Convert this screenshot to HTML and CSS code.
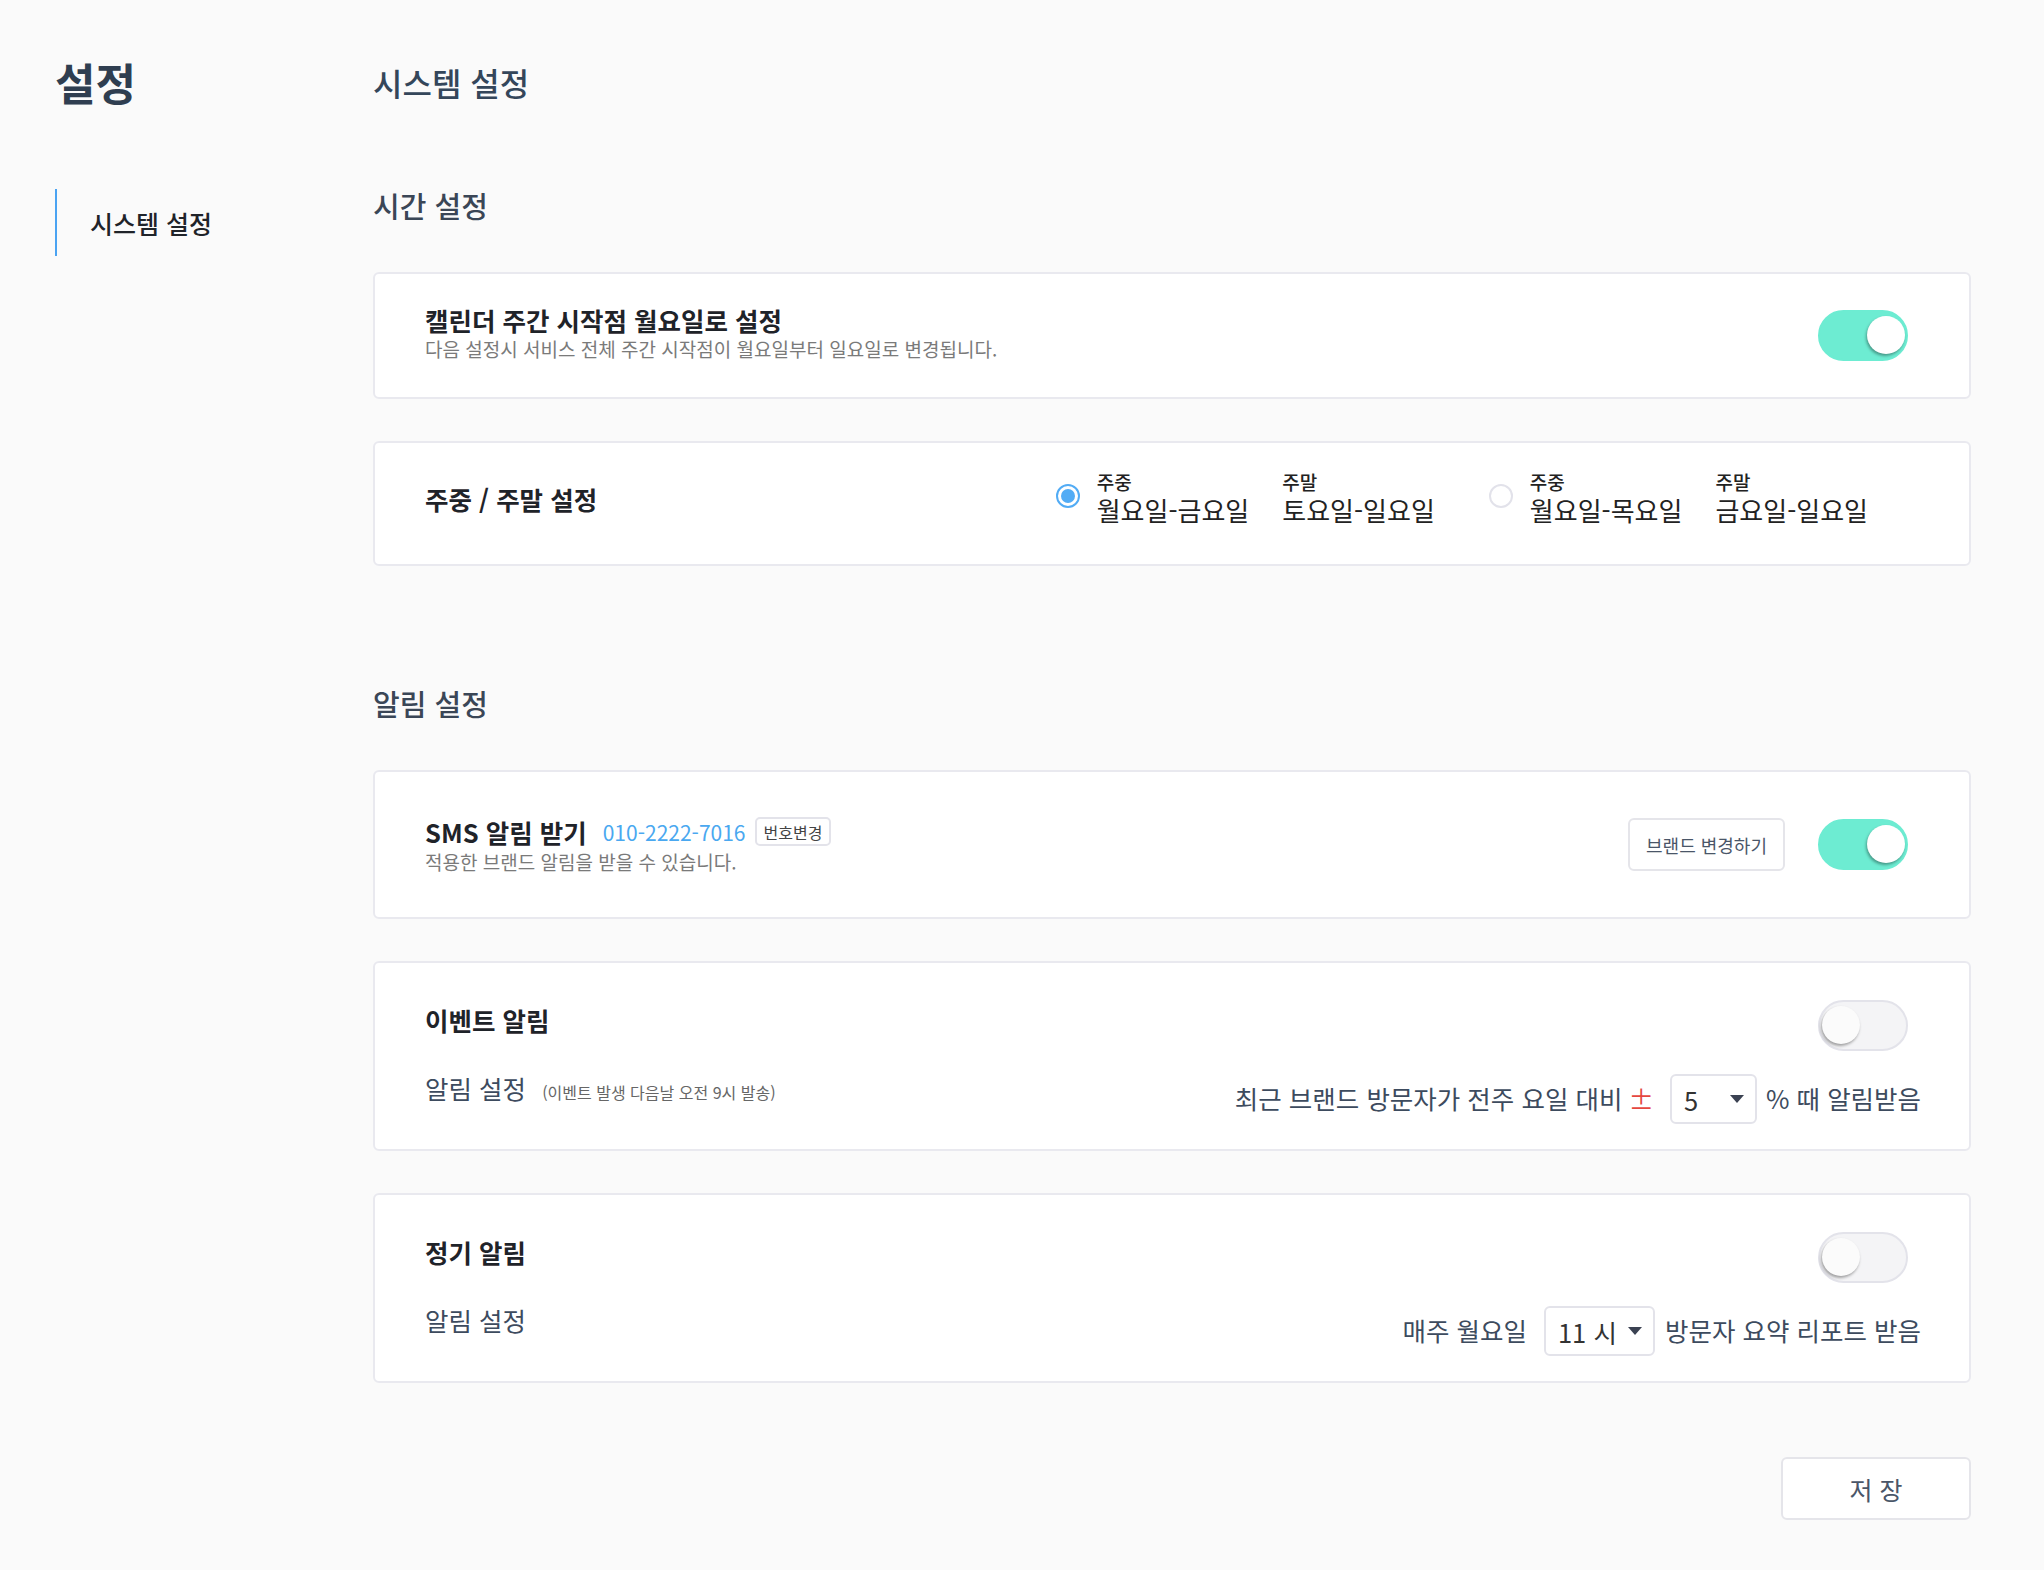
FILE: index.html
```html
<!DOCTYPE html>
<html lang="ko">
<head>
  <meta charset="UTF-8" />
  <meta name="viewport" content="width=device-width, initial-scale=1" />
  <title>설정</title>
  <link rel="stylesheet" href="styles.css">
</head>
<body>
<div class="page">
  <aside class="sidebar">
    <h1 class="sidebar-title">설정</h1>
    <nav class="side-nav">
      <a class="side-nav-item active" href="#">시스템 설정</a>
    </nav>
  </aside>

  <main class="content">
    <h2 class="page-title">시스템 설정</h2>

    <section class="group">
      <h3 class="group-title">시간 설정</h3>

      <div class="card card-row card-time">
        <div class="card-text">
          <div class="card-title">캘린더 주간 시작점 월요일로 설정</div>
          <div class="card-desc">다음 설정시 서비스 전체 주간 시작점이 월요일부터 일요일로 변경됩니다.</div>
        </div>
        <div class="switch on"><span class="knob"></span></div>
      </div>

      <div class="card card-row card-week">
        <div class="card-title">주중 / 주말 설정</div>
        <div class="week-options">
          <div class="week-option">
            <span class="radio checked"></span>
            <div class="week-col">
              <div class="week-label">주중</div>
              <div class="week-value">월요일-금요일</div>
            </div>
            <div class="week-col">
              <div class="week-label">주말</div>
              <div class="week-value">토요일-일요일</div>
            </div>
          </div>
          <div class="week-option">
            <span class="radio"></span>
            <div class="week-col">
              <div class="week-label">주중</div>
              <div class="week-value">월요일-목요일</div>
            </div>
            <div class="week-col">
              <div class="week-label">주말</div>
              <div class="week-value">금요일-일요일</div>
            </div>
          </div>
        </div>
      </div>
    </section>

    <section class="group">
      <h3 class="group-title">알림 설정</h3>

      <div class="card card-row card-sms">
        <div class="card-text">
          <div class="sms-head">
            <span class="card-title">SMS 알림 받기</span>
            <span class="phone">010-2222-7016</span>
            <span class="badge">번호변경</span>
          </div>
          <div class="card-desc">적용한 브랜드 알림을 받을 수 있습니다.</div>
        </div>
        <div class="card-actions">
          <button class="btn-outline">브랜드 변경하기</button>
          <div class="switch on"><span class="knob"></span></div>
        </div>
      </div>

      <div class="card card-alert">
        <div class="alert-head">
          <div class="card-title">이벤트 알림</div>
          <div class="switch"><span class="knob"></span></div>
        </div>
        <div class="alert-body">
          <div class="alert-label">알림 설정 <span class="hint">(이벤트 발생 다음날 오전 9시 발송)</span></div>
          <div class="alert-rule">
            <span>최근 브랜드 방문자가 전주 요일 대비</span>
            <span class="plusminus">±</span>
            <span class="select select-small"><span>5</span><span class="caret"></span></span>
            <span>% 때 알림받음</span>
          </div>
        </div>
      </div>

      <div class="card card-alert">
        <div class="alert-head">
          <div class="card-title">정기 알림</div>
          <div class="switch"><span class="knob"></span></div>
        </div>
        <div class="alert-body">
          <div class="alert-label">알림 설정</div>
          <div class="alert-rule">
            <span>매주 월요일</span>
            <span class="select select-hour"><span>11 시</span><span class="caret"></span></span>
            <span>방문자 요약 리포트 받음</span>
          </div>
        </div>
      </div>
    </section>

    <div class="actions">
      <button class="save-btn">저 장</button>
    </div>
  </main>
</div>
</body>
</html>
```

FILE: styles.css
```css
* {
  box-sizing: border-box;
}
body {
  margin: 0;
  background-color: #fafafa;
  font-family: "Noto Sans CJK KR", "Noto Sans", sans-serif;
  color: #1f2329;
}
.page {
  display: flex;
  min-height: 1570px;
}

/* sidebar */
.sidebar {
  width: 373px;
  flex: none;
  padding: 54px 0 0 55px;
}
.sidebar-title {
  margin: 0;
  font-size: 44px;
  line-height: 56px;
  font-weight: 700;
  color: #2f3e50;
}
.side-nav {
  margin-top: 79px;
}
.side-nav-item {
  display: flex;
  align-items: center;
  height: 67px;
  padding-left: 33px;
  border-left: 2px solid #4aa3f2;
  font-size: 25px;
  font-weight: 500;
  color: #1f2329;
  text-decoration: none;
}

/* main */
.content {
  flex: 1;
  padding: 60px 73px 60px 0;
}
.page-title {
  margin: 0;
  font-size: 32px;
  line-height: 44px;
  font-weight: 500;
  color: #34465a;
}
.group {
  margin-top: 82px;
}
.group + .group {
  margin-top: 118px;
}
.group-title {
  margin: 0 0 48px;
  font-size: 29px;
  line-height: 38px;
  font-weight: 500;
  color: #3a4656;
}

.card {
  background: #fff;
  border: 2px solid #e9e9ef;
  border-radius: 6px;
  padding: 0 48px 0 50px;
}
.card + .card {
  margin-top: 42px;
}
.card-row {
  display: flex;
  align-items: center;
  justify-content: space-between;
}
.card-time {
  height: 127px;
}
.card-time .card-text {
  margin-bottom: 6px;
}
.card-week {
  height: 125px;
}
.card-week .card-title,
.card-week .week-options {
  margin-bottom: 10px;
}
.card-sms {
  height: 149px;
}
.card-title {
  font-size: 25.5px;
  line-height: 33px;
  font-weight: 700;
  color: #1f2329;
}
.card-desc {
  font-size: 19px;
  line-height: 26px;
  color: #7a7a7a;
}

/* toggle */
.switch {
  position: relative;
  width: 90px;
  height: 51px;
  border-radius: 26px;
  background: #f4f4f6;
  border: 2px solid #e3e3ea;
  margin-right: 13px;
  flex: none;
}
.switch .knob {
  position: absolute;
  top: 4px;
  left: 2px;
  width: 38px;
  height: 38px;
  border-radius: 50%;
  background: #fbfbfb;
  box-shadow: -1px 2px 3px rgba(0, 0, 0, 0.35);
}
.switch.on {
  background: #6decd2;
  border-color: #6decd2;
}
.switch.on .knob {
  left: auto;
  right: 1px;
  background: #fff;
}

/* week radio */
.week-options {
  display: flex;
  gap: 54px;
  margin-right: 53px;
}
.week-option {
  display: flex;
  align-items: center;
}
.radio {
  width: 24px;
  height: 24px;
  border-radius: 50%;
  border: 2px solid #e2e2ea;
  margin: 0 17px 6px 0;
  flex: none;
  position: relative;
}
.radio.checked {
  border-color: #52acf5;
}
.radio.checked::after {
  content: "";
  position: absolute;
  top: 3px;
  left: 3px;
  width: 14px;
  height: 14px;
  border-radius: 50%;
  background: #52acf5;
}
.week-col + .week-col {
  margin-left: 33px;
}
.week-label {
  font-size: 19px;
  line-height: 22px;
  font-weight: 500;
  color: #222;
}
.week-value {
  font-size: 26px;
  line-height: 34px;
  color: #222;
}

/* sms */
.sms-head {
  display: flex;
  align-items: center;
  height: 34px;
}
.phone {
  margin-left: 16px;
  font-size: 21px;
  color: #4aa8f0;
}
.badge {
  margin-left: 9px;
  height: 29px;
  padding: 0 7px;
  display: flex;
  align-items: center;
  border: 2px solid #e3e3ea;
  border-radius: 5px;
  font-size: 16px;
  color: #444;
}
.card-actions {
  display: flex;
  align-items: center;
  gap: 33px;
}
.btn-outline {
  height: 53px;
  padding: 0 16px;
  background: #fff;
  border: 2px solid #e5e5ea;
  border-radius: 6px;
  font-family: inherit;
  font-size: 18px;
  color: #4a5668;
}

/* alert cards */
.card-alert {
  padding-top: 37px;
  padding-bottom: 25px;
}
.alert-head {
  display: flex;
  align-items: center;
  justify-content: space-between;
  height: 51px;
}
.alert-head .card-title {
  margin-bottom: 12px;
}
.alert-body {
  display: flex;
  align-items: flex-start;
  justify-content: space-between;
  margin-top: 23px;
}
.alert-label {
  font-size: 25.5px;
  line-height: 28px;
  color: #3d4b5e;
}
.hint {
  margin-left: 9px;
  font-size: 16px;
  color: #666;
}
.alert-rule {
  display: flex;
  align-items: center;
  height: 50px;
  padding-bottom: 3px;
  font-size: 25.5px;
  color: #3d4b5e;
  white-space: nowrap;
}
.plusminus {
  color: #e5473f;
  margin-left: 6px;
}
.select {
  display: inline-flex;
  align-items: center;
  justify-content: space-between;
  height: 50px;
  padding: 0 11px 0 12px;
  border: 2px solid #e3e3ea;
  border-radius: 6px;
  background: #fff;
  color: #333;
}
.select-small {
  width: 87px;
  margin: 3px 9px 0 16px;
}
.select-hour {
  width: 111px;
  margin: 3px 10px 0 17px;
}
.caret {
  width: 0;
  height: 0;
  border-left: 7px solid transparent;
  border-right: 7px solid transparent;
  border-top: 8px solid #3b4252;
}

/* save */
.actions {
  display: flex;
  justify-content: flex-end;
  margin-top: 74px;
}
.save-btn {
  width: 190px;
  height: 63px;
  background: #fff;
  border: 2px solid #e5e5ea;
  border-radius: 6px;
  font-family: inherit;
  font-size: 25px;
  color: #4a5668;
}
```
